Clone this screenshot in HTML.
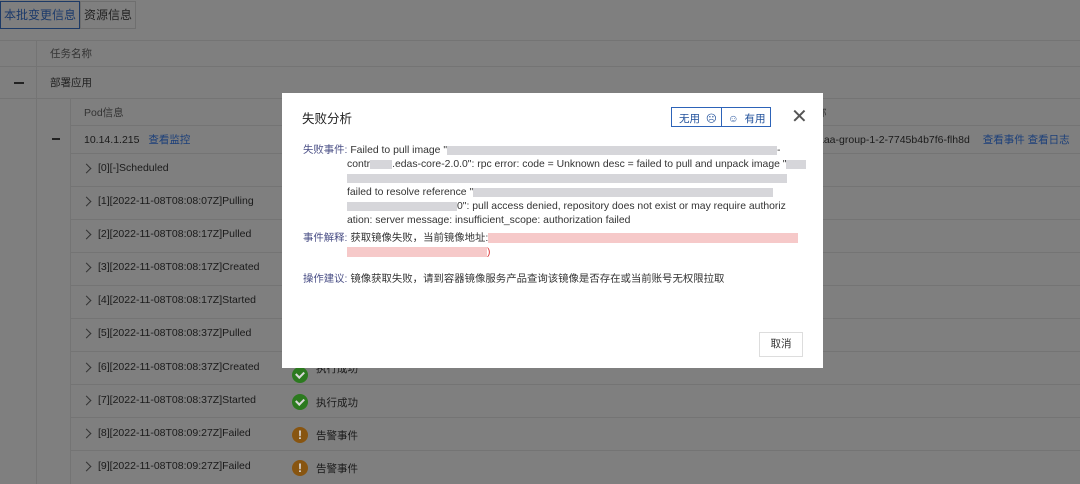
<!DOCTYPE html>
<html><head><meta charset="utf-8"><style>
*{margin:0;padding:0;box-sizing:border-box}
body{width:1080px;height:484px;overflow:hidden;background:#7f7f7f;font-family:"Liberation Sans","Noto Sans CJK SC",sans-serif;font-size:10.5px;color:#1a1a1a;position:relative}
.a{position:absolute;white-space:nowrap}
.tab{position:absolute;top:1px;height:28px;line-height:26px;font-size:12px;border:1px solid #6f6f6f;white-space:nowrap;text-align:center}
.hl{position:absolute;height:1px;background:#747474}
.vl{position:absolute;width:1px;background:#747474}
.blue{color:#1b3f7a}
.chev{position:absolute;width:7px;height:7px;border-right:1.3px solid #333;border-top:1.3px solid #333;transform:rotate(45deg)}
.ok{position:absolute;width:16px;height:16px;border-radius:50%;background:#2c7a1f}
.ok:after{content:"";position:absolute;left:4px;top:4px;width:6px;height:4px;border-left:2px solid #d8d8d8;border-bottom:2px solid #d8d8d8;transform:rotate(-45deg)}
.wr{position:absolute;width:16px;height:16px;border-radius:50%;background:#885510;color:#ddd;font-weight:bold;font-size:12px;text-align:center;line-height:16px}
.m{position:absolute;left:282px;top:93px;width:541px;height:275px;background:#fff}
.lb{color:#4a4f86}
.bl{display:inline-block;height:9px;vertical-align:middle;background:#d6d6da}
.rb{display:inline-block;height:10px;vertical-align:middle;background:#f6c9c9}
.r{font-size:10.5px}
</style></head><body>
<div class="tab" style="left:0;width:80px;border-color:#1d3a66;color:#1b3a6b">本批变更信息</div>
<div class="tab" style="left:80px;width:56px;color:#222">资源信息</div>
<div class="hl" style="left:0;right:0;top:40px"></div>
<div class="hl" style="left:0;right:0;top:66px"></div>
<div class="hl" style="left:0;right:0;top:98px"></div>
<div class="hl" style="left:70px;right:0;top:125px"></div>
<div class="hl" style="left:70px;right:0;top:153px"></div>
<div class="vl" style="left:36px;top:40px;height:444px"></div>
<div class="vl" style="left:70px;top:98px;height:386px"></div>
<div class="a" style="left:50px;top:46px;color:#333">任务名称</div>
<div class="a" style="left:14px;top:82px;width:10px;height:2px;background:#222"></div>
<div class="a" style="left:50px;top:75px;color:#222">部署应用</div>
<div class="a" style="left:84px;top:105px;color:#333">Pod信息</div>
<div class="a" style="left:52px;top:138px;width:8px;height:2px;background:#222"></div>
<div class="a" style="left:84px;top:132px">10.14.1.215 <span class="blue" style="margin-left:6px">查看监控</span></div>
<div class="a" style="left:816px;top:105px;color:#333">称</div>
<div class="a" style="left:818px;top:132px">aaa-group-1-2-7745b4b7f6-flh8d <span class="blue" style="margin-left:10px">查看事件 查看日志</span></div>
<div class="chev" style="left:83px;top:165px"></div><div class="a" style="left:98px;top:162px">[0][-]Scheduled</div>
<div class="chev" style="left:83px;top:198px"></div><div class="a" style="left:98px;top:195px">[1][2022-11-08T08:08:07Z]Pulling</div>
<div class="chev" style="left:83px;top:231px"></div><div class="a" style="left:98px;top:228px">[2][2022-11-08T08:08:17Z]Pulled</div>
<div class="chev" style="left:83px;top:264px"></div><div class="a" style="left:98px;top:261px">[3][2022-11-08T08:08:17Z]Created</div>
<div class="chev" style="left:83px;top:297px"></div><div class="a" style="left:98px;top:294px">[4][2022-11-08T08:08:17Z]Started</div>
<div class="chev" style="left:83px;top:330px"></div><div class="a" style="left:98px;top:327px">[5][2022-11-08T08:08:37Z]Pulled</div>
<div class="chev" style="left:83px;top:364px"></div><div class="a" style="left:98px;top:361px">[6][2022-11-08T08:08:37Z]Created</div>
<div class="chev" style="left:83px;top:397px"></div><div class="a" style="left:98px;top:394px">[7][2022-11-08T08:08:37Z]Started</div>
<div class="chev" style="left:83px;top:430px"></div><div class="a" style="left:98px;top:427px">[8][2022-11-08T08:09:27Z]Failed</div>
<div class="chev" style="left:83px;top:463px"></div><div class="a" style="left:98px;top:460px">[9][2022-11-08T08:09:27Z]Failed</div>
<div class="hl" style="left:70px;right:0;top:186px"></div><div class="hl" style="left:70px;right:0;top:219px"></div>
<div class="hl" style="left:70px;right:0;top:252px"></div><div class="hl" style="left:70px;right:0;top:285px"></div>
<div class="hl" style="left:70px;right:0;top:318px"></div><div class="hl" style="left:70px;right:0;top:351px"></div>
<div class="hl" style="left:70px;right:0;top:384px"></div><div class="hl" style="left:70px;right:0;top:417px"></div>
<div class="hl" style="left:70px;right:0;top:450px"></div>
<div class="ok" style="left:292px;top:367px"></div><div class="a" style="left:316px;top:361px">执行成功</div>
<div class="ok" style="left:292px;top:394px"></div><div class="a" style="left:316px;top:395px">执行成功</div>
<div class="wr" style="left:292px;top:427px">!</div><div class="a" style="left:316px;top:428px">告警事件</div>
<div class="wr" style="left:292px;top:460px">!</div><div class="a" style="left:316px;top:461px">告警事件</div>

<div class="m">
<div class="a" style="left:20px;top:15px;font-size:12.5px;color:#222">失败分析</div>
<div class="a" style="left:389px;top:14px;width:100px;height:20px;border:1px solid #2d63b8"></div>
<div class="a" style="left:439px;top:14px;width:1px;height:20px;background:#2d63b8"></div>
<div class="a" style="left:397px;top:18px;font-size:10.5px;color:#1f4f9a">无用 &nbsp;☹</div>
<div class="a" style="left:446px;top:18px;font-size:10.5px;color:#1f4f9a">☺ &nbsp;有用</div>
<div class="a" style="left:509px;top:11px;font-size:20px;color:#555;font-weight:300">✕</div>
<div class="a" style="left:21px;top:51px;font-size:10.4px;line-height:14px;color:#333">
<span class="lb">失败事件:</span> Failed to pull image "<span class="bl" style="width:330px"></span>-<br>
<span style="padding-left:44px">contr<span class="bl" style="width:22px"></span>.edas-core-2.0.0": rpc error: code = Unknown desc = failed to pull and unpack image "<span class="bl" style="width:20px"></span></span><br>
<span style="padding-left:44px"><span class="bl" style="width:440px"></span></span><br>
<span style="padding-left:44px">failed to resolve reference "<span class="bl" style="width:300px"></span></span><br>
<span style="padding-left:44px"><span class="bl" style="width:110px"></span>0": pull access denied, repository does not exist or may require authoriz</span><br>
<span style="padding-left:44px">ation: server message: insufficient_scope: authorization failed</span><br>
<div style="height:4px"></div>
<span class="lb">事件解释:</span> 获取镜像失败，当前镜像地址:<span class="rb" style="width:310px"></span><br>
<span style="padding-left:44px"><span class="rb" style="width:140px"></span><span style="color:#d33">)</span></span><br>
<div style="height:13px"></div>
<span class="lb">操作建议:</span> 镜像获取失败，请到容器镜像服务产品查询该镜像是否存在或当前账号无权限拉取
</div>
<div class="a" style="left:477px;top:239px;width:44px;height:25px;border:1px solid #ddd;text-align:center;line-height:23px;font-size:10.5px;color:#333">取消</div>
</div>
</body></html>
